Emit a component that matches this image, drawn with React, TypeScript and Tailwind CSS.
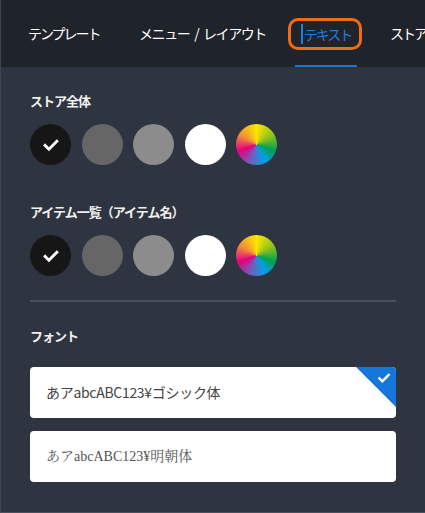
import React from "react";

const swatches = ["bg-[#161616]", "bg-[#666666]", "bg-[#8c8c8c]", "bg-white"];

const Check = ({ className }: { className?: string }) => (
  <svg viewBox="0 0 24 24" className={className} fill="none" stroke="currentColor" strokeWidth="3.5" strokeLinecap="square">
    <path d="M5 12.5l4.5 4.5L19 7.5" />
  </svg>
);

const ColorRow = () => (
  <div className="flex gap-[10.5px] mt-[13px]">
    {swatches.map((c, i) => (
      <div key={c} className={`w-[41px] h-[41px] rounded-full ${c} flex items-center justify-center`}>
        {i === 0 && <Check className="w-[20px] h-[20px] text-white" />}
      </div>
    ))}
    <div className="w-[41px] h-[41px] rounded-full bg-[conic-gradient(#ffe600_0deg,#8dc21f_60deg,#00a051_110deg,#00a0e9_150deg,#6f5fbf_200deg,#e4007f_250deg,#f08c3a_300deg,#ffe600_360deg)]" />
  </div>
);

export default function App() {
  return (
    <div className="w-[425px] h-[513px] bg-[#2e3540] border-l border-[#3e4550] border-b border-b-[#4a515c] overflow-hidden font-['Noto_Sans_CJK_JP','Noto_Sans',sans-serif]">
      <div className="h-[67px] bg-[#1f232a] flex items-stretch text-white text-[14px] tracking-[-2px] whitespace-nowrap">
        <div className="ml-[27px] w-[72px] shrink-0 flex items-center">テンプレート</div>
        <div className="ml-[39px] w-[121px] shrink-0 flex items-center tracking-[-1.4px] [word-spacing:3px]">メニュー / レイアウト</div>
        <div className="relative ml-[35px] w-[62px] shrink-0 flex items-center justify-center">
          <div className="absolute left-[-7px] top-[18px] w-[74px] h-[32px] rounded-[10px] border-[3px] border-[#f26b0f]" />
          <span className="relative text-[#1e7ee0] border-l-2 border-[#1e7ee0] pl-[1px] leading-[20px]">テキスト</span>
          <div className="absolute left-0 bottom-0 w-full h-[2px] bg-[#1578dd]" />
        </div>
        <div className="ml-[33px] shrink-0 flex items-center">ストア全体</div>
      </div>

      <div className="px-[29px] pt-[24px]">
        <div className="text-[13px] font-semibold tracking-[-1px] text-[#f0f0f0] leading-[20px]">ストア全体</div>
        <ColorRow />

        <div className="text-[13px] font-semibold tracking-[-1px] text-[#f0f0f0] leading-[20px] mt-[37px]">アイテム一覧（アイテム名）</div>
        <ColorRow />

        <div className="h-[2px] bg-[#4a4f5a] mt-[24px]" />

        <div className="text-[13px] font-semibold tracking-[-1px] text-[#f0f0f0] leading-[20px] mt-[24px]">フォント</div>

        <div className="relative mt-[21px] h-[51px] bg-white rounded-[4px] overflow-hidden flex items-center pl-[16px] text-[14px] tracking-[-0.3px] text-[#444]">
          あアabcABC123¥ゴシック体
          <div className="absolute right-0 top-0 w-[40px] h-[40px] bg-[#1576dc] [clip-path:polygon(0_0,100%_0,100%_100%)]" />
          <Check className="absolute right-[4px] top-[3px] w-[16px] h-[16px] text-white" />
        </div>

        <div className="mt-[13px] h-[51px] bg-white rounded-[4px] flex items-center pl-[16px] text-[14px] text-[#555] font-['Liberation_Serif','Noto_Serif_CJK_JP','Noto_Sans_CJK_JP',serif]">
          あアabcABC123¥明朝体
        </div>
      </div>
    </div>
  );
}
